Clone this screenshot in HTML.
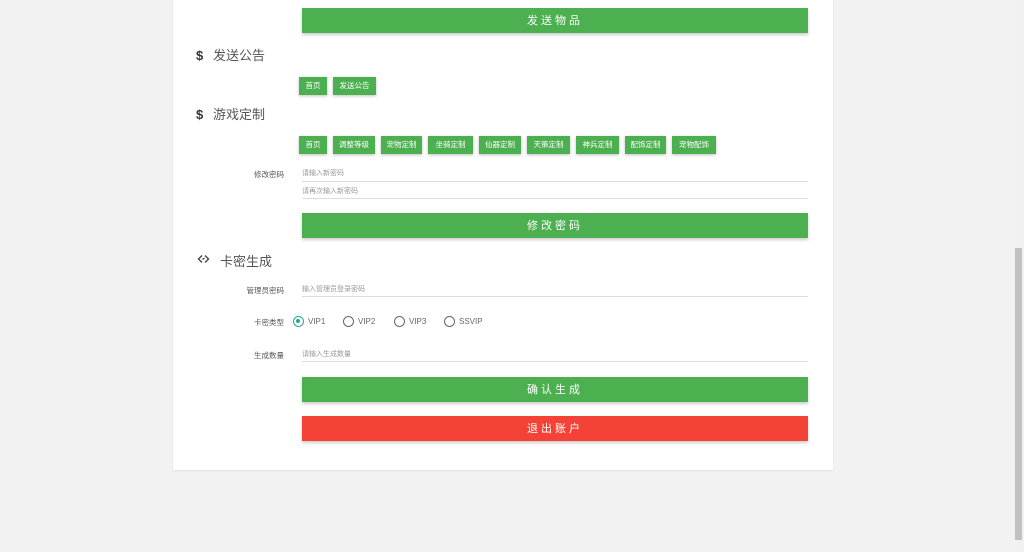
<!DOCTYPE html>
<html><head><meta charset="utf-8"><style>
*{margin:0;padding:0;box-sizing:border-box}
body{width:1024px;height:552px;background:#f2f2f2;position:relative;overflow:hidden;font-family:"Liberation Sans","Noto Sans CJK SC",sans-serif}
.card{position:absolute;left:173px;top:-10px;width:660px;height:480px;background:#fff;box-shadow:0 1px 2px rgba(0,0,0,.08)}
.a{position:absolute}
.big{position:absolute;left:302px;width:506px;height:25px;background:#4caf50;color:#fff;font-size:11px;letter-spacing:3px;text-align:center;line-height:26px;box-shadow:0 2px 3px rgba(0,0,0,.2)}
.red{background:#f44336}
.sb{position:absolute;height:18px;background:#4caf50;color:#fff;font-size:7.5px;line-height:18px;text-align:center;box-shadow:0 1px 3px rgba(0,0,0,.25)}
.h{position:absolute;left:196px;font-size:13px;color:#555}
.h b{display:inline-block;width:17px;font-weight:bold;color:#333}
.lb{position:absolute;right:740px;font-size:7.5px;color:#555}
.ph{position:absolute;left:302px;font-size:7px;color:#999}
.ln{position:absolute;left:302px;width:506px;height:1px;background:#ddd}
.r{position:absolute;top:316px;font-size:8px;color:#666}
.r i{display:inline-block;width:11px;height:11px;border:1.5px solid #666;border-radius:50%;vertical-align:-3px;margin-right:4px;position:relative}
.r i.on{border-color:#26a69a}
.r i.on:after{content:"";position:absolute;left:2px;top:2px;width:4px;height:4px;border-radius:50%;background:#26a69a}
</style></head><body>
<div class="card"></div>
<div class="big" style="top:8px">发送物品</div>
<div class="h" style="top:45px"><b>$</b>发送公告</div>
<div class="sb" style="left:299px;top:77px;width:28px">首页</div>
<div class="sb" style="left:333px;top:77px;width:43px">发送公告</div>
<div class="h" style="top:104px"><b>$</b>游戏定制</div>
<div class="sb" style="left:299px;top:136px;width:28px">首页</div>
<div class="sb" style="left:333px;top:136px;width:42px">调整等级</div>
<div class="sb" style="left:381px;top:136px;width:41px">宠物定制</div>
<div class="sb" style="left:428px;top:136px;width:45px">坐骑定制</div>
<div class="sb" style="left:479px;top:136px;width:42px">仙器定制</div>
<div class="sb" style="left:527px;top:136px;width:43px">天策定制</div>
<div class="sb" style="left:576px;top:136px;width:43px">神兵定制</div>
<div class="sb" style="left:625px;top:136px;width:41px">配饰定制</div>
<div class="sb" style="left:672px;top:136px;width:44px">宠物配饰</div>
<div class="lb" style="top:169px">修改密码</div>
<div class="ph" style="top:168px">请输入新密码</div>
<div class="ln" style="top:181px"></div>
<div class="ph" style="top:186px">请再次输入新密码</div>
<div class="ln" style="top:198px"></div>
<div class="big" style="top:213px">修改密码</div>
<svg class="a" style="left:197px;top:254px" width="13" height="10" viewBox="0 0 13 10" fill="none" stroke="#444" stroke-width="1.4"><path d="M5 1.5L1.5 5L5 8.5M8 1.5L11.5 5L8 8.5M5.5 5.5L7.5 4"/></svg>
<div class="h" style="top:251px;left:220px">卡密生成</div>
<div class="lb" style="top:285px">管理员密码</div>
<div class="ph" style="top:284px">输入管理员登录密码</div>
<div class="ln" style="top:296px"></div>
<div class="lb" style="top:317px">卡密类型</div>
<div class="r" style="left:293px"><i class="on"></i>VIP1</div>
<div class="r" style="left:343px"><i></i>VIP2</div>
<div class="r" style="left:394px"><i></i>VIP3</div>
<div class="r" style="left:444px"><i></i>SSVIP</div>
<div class="lb" style="top:350px">生成数量</div>
<div class="ph" style="top:349px">请输入生成数量</div>
<div class="ln" style="top:361px"></div>
<div class="big" style="top:377px">确认生成</div>
<div class="big red" style="top:416px">退出账户</div>
<div class="a" style="left:1013px;top:0;width:11px;height:552px;background:#f1f1f1"></div>
<div class="a" style="left:1015px;top:248px;width:7px;height:292px;background:#c1c1c1"></div>
</body></html>
